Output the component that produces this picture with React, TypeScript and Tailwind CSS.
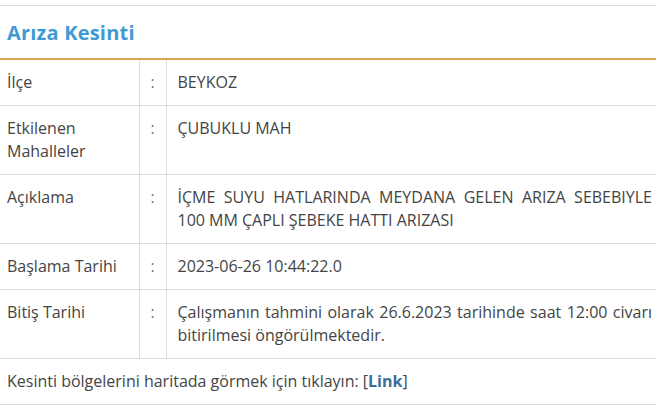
const rows = [
  { label: "İlçe", value: "BEYKOZ" },
  { label: "Etkilenen Mahalleler", value: "ÇUBUKLU MAH" },
  {
    label: "Açıklama",
    value: "İÇME SUYU HATLARINDA MEYDANA GELEN ARIZA SEBEBIYLE 100 MM ÇAPLI ŞEBEKE HATTI ARIZASI",
  },
  { label: "Başlama Tarihi", value: "2023-06-26 10:44:22.0" },
  {
    label: "Bitiş Tarihi",
    value: "Çalışmanın tahmini olarak 26.6.2023 tarihinde saat 12:00 civarı bitirilmesi öngörülmektedir.",
  },
];

const cell = "border-b border-[#dcdcdc] py-[11px] align-top";

export default function App() {
  return (
    <div className="h-[405px] w-[656px] overflow-hidden bg-white pt-[5px] font-['Open_Sans',sans-serif] text-[16px] leading-[23px] text-[#444]">
      <div className="border-t border-[#dcdcdc]">
        <h2 className="flex h-[52px] items-center px-[7px] font-['Open_Sans',sans-serif] text-[20px] font-bold tracking-[0.2px] text-[#4199d4]">
          Arıza Kesinti
        </h2>
        <div className="h-[2px] bg-[#dca847]" />
        <table className="w-full table-fixed border-collapse">
          <colgroup>
            <col className="w-[139px]" />
            <col className="w-[27px]" />
            <col />
          </colgroup>
          <tbody>
            {rows.map((r) => (
              <tr key={r.label}>
                <td className={`${cell} border-r pl-[7px] pr-[8px]`}>{r.label}</td>
                <td className={`${cell} border-r text-center text-[#777]`}>:</td>
                <td className={`${cell} pl-[11px] pr-[4px] text-justify`}>{r.value}</td>
              </tr>
            ))}
            <tr>
              <td colSpan={3} className={`${cell} px-[7px]`}>
                Kesinti bölgelerini haritada görmek için tıklayın: [
                <a className="font-bold text-[#3b6e96]">Link</a>]
              </td>
            </tr>
          </tbody>
        </table>
      </div>
    </div>
  );
}
